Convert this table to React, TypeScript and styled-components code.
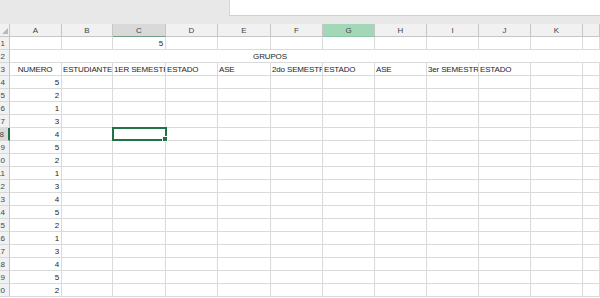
import styled, { createGlobalStyle, css } from "styled-components";

const COLUMNS = ["A", "B", "C", "D", "E", "F", "G", "H", "I", "J", "K", "L"];
const TEMPLATE = "10px 52px 51px 53px 52px 53px 52px 52px 52px 52px 52px 52px 1fr";

const GRID = "#dadada";
const HEAD_LINE = "#c6c6c6";
const ACCENT = "#217346";

type Align = "left" | "center" | "right";

interface CellData {
  text?: string;
  align?: Align;
}

const HEADINGS: CellData[] = [
  { text: "NUMERO", align: "center" },
  { text: "ESTUDIANTE" },
  { text: "1ER SEMESTRE" },
  { text: "ESTADO" },
  { text: "ASE" },
  { text: "2do SEMESTRE" },
  { text: "ESTADO" },
  { text: "ASE" },
  { text: "3er SEMESTRE" },
  { text: "ESTADO" },
  {},
  {},
];

const NUMEROS = [5, 2, 1, 3, 4, 5, 2, 1, 3, 4, 5, 2, 1, 3, 4, 5, 2];

const GlobalStyle = createGlobalStyle`
  html, body {
    margin: 0;
    padding: 0;
    background: #ffffff;
    overflow: hidden;
  }
  body {
    font-family: "Liberation Sans", Arial, sans-serif;
  }
`;

const Window = styled.div`
  width: 600px;
  height: 298px;
  overflow: hidden;
  display: flex;
  flex-direction: column;
  background: #ffffff;
`;

const TopBand = styled.div`
  height: 24px;
  flex: none;
  background: #e8e8e8;
  display: flex;
  padding-left: 229px;
  box-sizing: border-box;
`;

const FormulaBox = styled.div`
  flex: 1;
  height: 16px;
  background: #ffffff;
  border-left: 1px solid #d6d6d6;
  border-bottom: 1px solid #d0d0d0;
  box-sizing: border-box;
`;

const Row = styled.div`
  display: grid;
  grid-template-columns: ${TEMPLATE};
  height: 13px;
  flex: none;
`;

const HeaderRow = styled(Row)`
  background: #f1f1f1;
`;

const Corner = styled.div`
  position: relative;
  border-right: 1px solid ${HEAD_LINE};
  border-bottom: 1px solid ${HEAD_LINE};
  box-sizing: border-box;

  &::after {
    content: "";
    position: absolute;
    right: 1px;
    bottom: 2px;
    width: 0;
    height: 0;
    border-left: 6px solid transparent;
    border-bottom: 6px solid #b8b8b8;
  }
`;

const ColHead = styled.div<{ $state?: "selected" | "active" }>`
  display: flex;
  align-items: center;
  justify-content: center;
  font-size: 8px;
  color: #444444;
  border-right: 1px solid ${HEAD_LINE};
  border-bottom: 1px solid ${HEAD_LINE};
  box-sizing: border-box;
  ${({ $state }) =>
    $state === "selected" &&
    css`
      background: #d9d9d9;
      border-bottom: 1px solid #6f9f82;
    `}
  ${({ $state }) =>
    $state === "active" &&
    css`
      background: #a3d7b8;
      border-bottom: 1px solid #8cc6a3;
    `}
`;

const RowHead = styled.div<{ $active?: boolean }>`
  display: flex;
  align-items: flex-end;
  justify-content: flex-end;
  padding-right: 4px;
  overflow: hidden;
  white-space: nowrap;
  font-size: 8px;
  line-height: 11px;
  color: #444444;
  background: #f1f1f1;
  border-right: 1px solid ${HEAD_LINE};
  border-bottom: 1px solid #d8d8d8;
  box-sizing: border-box;
  ${({ $active }) =>
    $active &&
    css`
      background: #d9d9d9;
      border-right: 2px solid ${ACCENT};
    `}
`;

const Cell = styled.div<{ $align?: Align; $open?: boolean; $span?: number }>`
  position: relative;
  display: flex;
  align-items: flex-end;
  justify-content: ${({ $align }) =>
    $align === "right" ? "flex-end" : $align === "center" ? "center" : "flex-start"};
  padding: 0 2px 0 1px;
  overflow: hidden;
  white-space: nowrap;
  font-size: 8px;
  letter-spacing: -0.15px;
  line-height: 11px;
  color: #1e1e1e;
  border-right: ${({ $open }) => ($open ? "none" : `1px solid ${GRID}`)};
  border-bottom: 1px solid ${GRID};
  box-sizing: border-box;
  grid-column: ${({ $span }) => ($span ? `span ${$span}` : "auto")};
`;

const Selection = styled.div`
  position: absolute;
  left: -1px;
  top: -1px;
  right: -2px;
  bottom: -1px;
  border: 2px solid ${ACCENT};
  box-sizing: border-box;
  pointer-events: none;

  &::after {
    content: "";
    position: absolute;
    right: -3px;
    bottom: -3px;
    width: 4px;
    height: 4px;
    background: ${ACCENT};
    border: 1px solid #ffffff;
  }
`;

const SelectedCell = styled(Cell)`
  overflow: visible;
  z-index: 1;
`;

const Sheet = styled.div`
  display: flex;
  flex-direction: column;
`;

const emptyCells = (from: number) =>
  COLUMNS.slice(from).map((c) => <Cell key={c} />);

const App = () => {
  return (
    <Window>
      <GlobalStyle />
      <TopBand>
        <FormulaBox />
      </TopBand>

      <Sheet>
        <HeaderRow>
          <Corner />
          {COLUMNS.map((c) => (
            <ColHead
              key={c}
              $state={c === "C" ? "selected" : c === "G" ? "active" : undefined}
            >
              {c === "L" ? "" : c}
            </ColHead>
          ))}
        </HeaderRow>

        <Row>
          <RowHead>1</RowHead>
          <Cell />
          <Cell />
          <Cell $align="right">5</Cell>
          {emptyCells(3)}
        </Row>

        <Row>
          <RowHead>2</RowHead>
          <Cell $span={3} $open />
          <Cell $span={4} $open $align="center">
            GRUPOS
          </Cell>
          <Cell $span={5} $open />
        </Row>

        <Row>
          <RowHead>3</RowHead>
          {HEADINGS.map((h, i) => (
            <Cell key={i} $align={h.align}>
              {h.text}
            </Cell>
          ))}
        </Row>

        {NUMEROS.map((n, i) => {
          const rowNumber = i + 4;
          const active = rowNumber === 8;
          return (
            <Row key={rowNumber}>
              <RowHead $active={active}>{rowNumber}</RowHead>
              <Cell $align="right">{n}</Cell>
              <Cell />
              {active ? (
                <SelectedCell>
                  <Selection />
                </SelectedCell>
              ) : (
                <Cell />
              )}
              {emptyCells(3)}
            </Row>
          );
        })}
      </Sheet>
    </Window>
  );
};

export default App;
